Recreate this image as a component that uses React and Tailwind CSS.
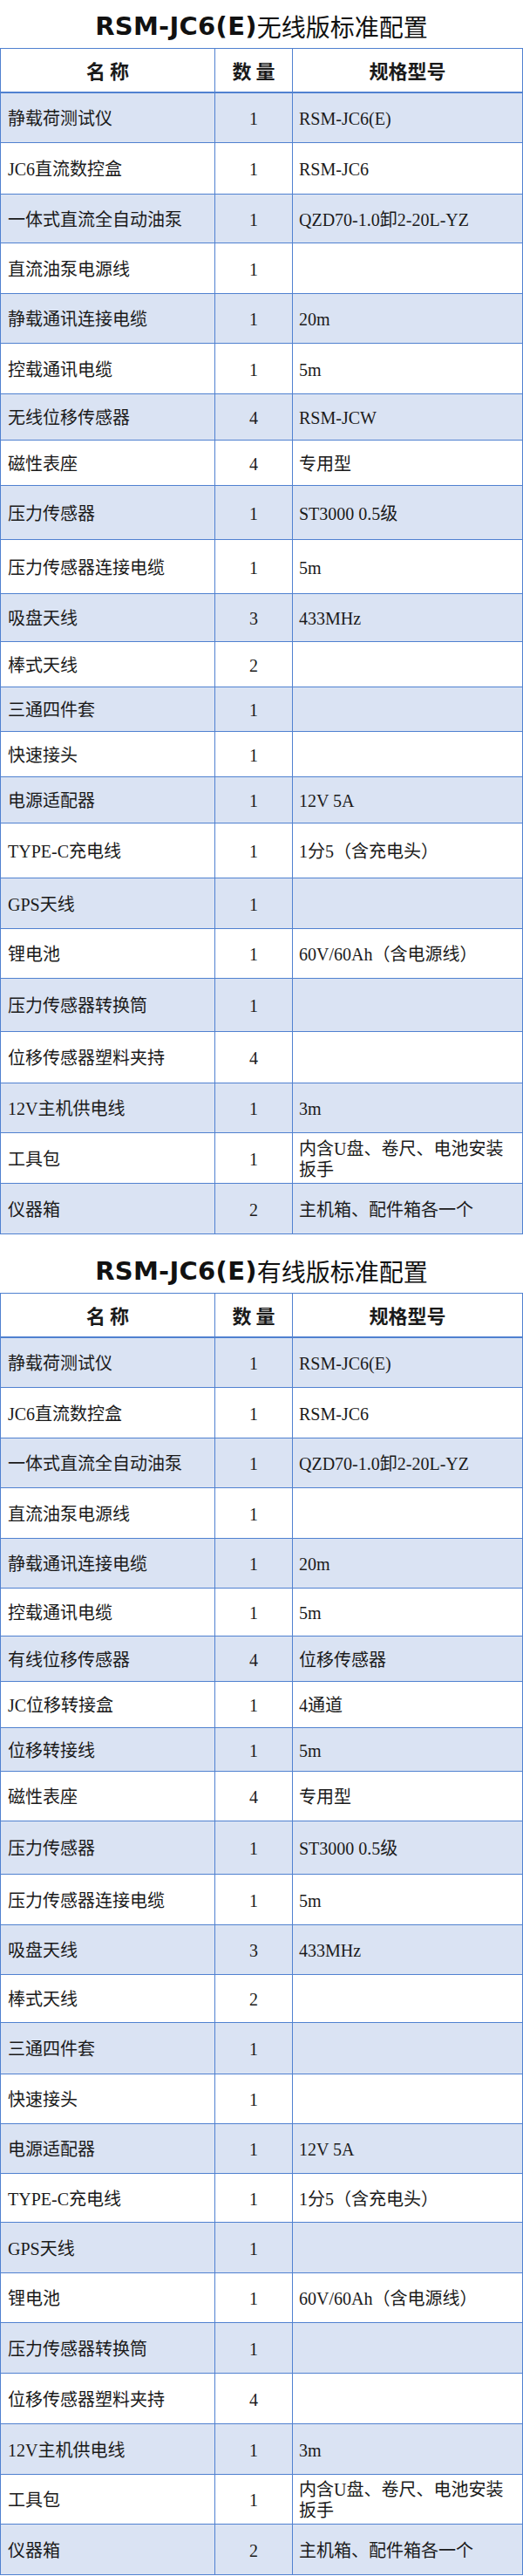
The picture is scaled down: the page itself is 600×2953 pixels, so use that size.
import React from 'react';

const wireless = [
  { name: '静载荷测试仪', qty: '1', spec: 'RSM-JC6(E)', h: 'h-[57px]' },
  { name: 'JC6直流数控盒', qty: '1', spec: 'RSM-JC6', h: 'h-[59px]' },
  { name: '一体式直流全自动油泵', qty: '1', spec: 'QZD70-1.0卸2-20L-YZ', h: 'h-[56px]' },
  { name: '直流油泵电源线', qty: '1', spec: '', h: 'h-[58px]' },
  { name: '静载通讯连接电缆', qty: '1', spec: '20m', h: 'h-[57px]' },
  { name: '控载通讯电缆', qty: '1', spec: '5m', h: 'h-[58px]' },
  { name: '无线位移传感器', qty: '4', spec: 'RSM-JCW', h: 'h-[53px]' },
  { name: '磁性表座', qty: '4', spec: '专用型', h: 'h-[52px]' },
  { name: '压力传感器', qty: '1', spec: 'ST3000 0.5级', h: 'h-[62px]' },
  { name: '压力传感器连接电缆', qty: '1', spec: '5m', h: 'h-[62px]' },
  { name: '吸盘天线', qty: '3', spec: '433MHz', h: 'h-[55px]' },
  { name: '棒式天线', qty: '2', spec: '', h: 'h-[52px]' },
  { name: '三通四件套', qty: '1', spec: '', h: 'h-[51px]' },
  { name: '快速接头', qty: '1', spec: '', h: 'h-[52px]' },
  { name: '电源适配器', qty: '1', spec: '12V 5A', h: 'h-[53px]' },
  { name: 'TYPE-C充电线', qty: '1', spec: '1分5（含充电头）', h: 'h-[63px]' },
  { name: 'GPS天线', qty: '1', spec: '', h: 'h-[58px]' },
  { name: '锂电池', qty: '1', spec: '60V/60Ah（含电源线）', h: 'h-[57px]' },
  { name: '压力传感器转换筒', qty: '1', spec: '', h: 'h-[61px]' },
  { name: '位移传感器塑料夹持', qty: '4', spec: '', h: 'h-[59px]' },
  { name: '12V主机供电线', qty: '1', spec: '3m', h: 'h-[57px]' },
  { name: '工具包', qty: '1', spec: 'tools', h: 'h-[58px]' },
  { name: '仪器箱', qty: '2', spec: '主机箱、配件箱各一个', h: 'h-[58px]' },
];

const wired = [
  { name: '静载荷测试仪', qty: '1', spec: 'RSM-JC6(E)', h: 'h-[57px]' },
  { name: 'JC6直流数控盒', qty: '1', spec: 'RSM-JC6', h: 'h-[58px]' },
  { name: '一体式直流全自动油泵', qty: '1', spec: 'QZD70-1.0卸2-20L-YZ', h: 'h-[57px]' },
  { name: '直流油泵电源线', qty: '1', spec: '', h: 'h-[58px]' },
  { name: '静载通讯连接电缆', qty: '1', spec: '20m', h: 'h-[57px]' },
  { name: '控载通讯电缆', qty: '1', spec: '5m', h: 'h-[55px]' },
  { name: '有线位移传感器', qty: '4', spec: '位移传感器', h: 'h-[52px]' },
  { name: 'JC位移转接盒', qty: '1', spec: '4通道', h: 'h-[53px]' },
  { name: '位移转接线', qty: '1', spec: '5m', h: 'h-[50px]' },
  { name: '磁性表座', qty: '4', spec: '专用型', h: 'h-[57px]' },
  { name: '压力传感器', qty: '1', spec: 'ST3000 0.5级', h: 'h-[61px]' },
  { name: '压力传感器连接电缆', qty: '1', spec: '5m', h: 'h-[58px]' },
  { name: '吸盘天线', qty: '3', spec: '433MHz', h: 'h-[57px]' },
  { name: '棒式天线', qty: '2', spec: '', h: 'h-[55px]' },
  { name: '三通四件套', qty: '1', spec: '', h: 'h-[59px]' },
  { name: '快速接头', qty: '1', spec: '', h: 'h-[57px]' },
  { name: '电源适配器', qty: '1', spec: '12V 5A', h: 'h-[57px]' },
  { name: 'TYPE-C充电线', qty: '1', spec: '1分5（含充电头）', h: 'h-[56px]' },
  { name: 'GPS天线', qty: '1', spec: '', h: 'h-[58px]' },
  { name: '锂电池', qty: '1', spec: '60V/60Ah（含电源线）', h: 'h-[57px]' },
  { name: '压力传感器转换筒', qty: '1', spec: '', h: 'h-[58px]' },
  { name: '位移传感器塑料夹持', qty: '4', spec: '', h: 'h-[58px]' },
  { name: '12V主机供电线', qty: '1', spec: '3m', h: 'h-[58px]' },
  { name: '工具包', qty: '1', spec: 'tools', h: 'h-[57px]' },
  { name: '仪器箱', qty: '2', spec: '主机箱、配件箱各一个', h: 'h-[58px]' },
];

function Title({ children, top }) {
  return (
    <div
      className={`flex items-center justify-center text-[#111] ${top ? 'h-[55px] pt-[5px]' : 'h-[67px] pt-[17px]'}`}
    >
      <span className="font-['DejaVu_Sans',sans-serif] font-bold text-[29px] tracking-[0.3px] leading-none">
        RSM-JC6(E)
      </span>
      <span className="font-['Noto_Sans_CJK_SC',sans-serif] text-[28px] leading-none">
        {children}
      </span>
    </div>
  );
}

function SpecText({ spec }) {
  if (spec === 'tools') {
    return (
      <span className="leading-[24px]">
        内含U盘、卷尺、电池安装
        <br />
        扳手
      </span>
    );
  }
  return <span>{spec}</span>;
}

function ConfigTable({ rows }) {
  return (
    <div className="border-t border-l border-r border-[#5081d0] font-['Liberation_Serif','Noto_Sans_CJK_SC',serif] text-[#1a1a1a]">
      {/* Header */}
      <div className="grid grid-cols-[246px_89px_1fr] h-[51px] border-b-2 border-[#5081d0] bg-white font-['Noto_Sans_CJK_SC',sans-serif] font-bold text-[22px]">
        <div className="flex items-center justify-center border-r border-[#5081d0]">名 称</div>
        <div className="flex items-center justify-center border-r border-[#5081d0]">数 量</div>
        <div className="flex items-center justify-center">规格型号</div>
      </div>

      {rows.map((row, i) => (
        <div
          key={i}
          className={`grid grid-cols-[246px_89px_1fr] border-b border-[#5081d0] text-[20px] ${row.h} ${i % 2 === 0 ? 'bg-[#dae3f3]' : 'bg-white'}`}
        >
          <div className="flex items-center pl-[8px] pt-[2px] border-r border-[#5081d0] whitespace-nowrap">
            {row.name}
          </div>
          <div className="flex items-center justify-center pt-[2px] border-r border-[#5081d0]">
            {row.qty}
          </div>
          <div className="flex items-center pl-[7px] pt-[2px] whitespace-nowrap">
            <SpecText spec={row.spec} />
          </div>
        </div>
      ))}
    </div>
  );
}

export default function App() {
  return (
    <div className="w-[600px] bg-white">
      <Title top>无线版标准配置</Title>
      <ConfigTable rows={wireless} />
      <Title>有线版标准配置</Title>
      <ConfigTable rows={wired} />
    </div>
  );
}
